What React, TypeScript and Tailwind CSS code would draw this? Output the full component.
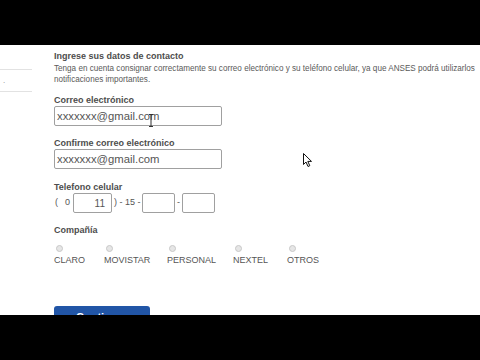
import React from 'react'

const companies = [
  { name: 'CLARO', w: 'w-[50px]' },
  { name: 'MOVISTAR', w: 'w-[63px]' },
  { name: 'PERSONAL', w: 'w-[66px]' },
  { name: 'NEXTEL', w: 'w-[54px]' },
  { name: 'OTROS', w: 'w-[40px]' },
]

const font = { fontFamily: '"Liberation Sans", Arial, sans-serif' }

const Label = ({ children }: { children: React.ReactNode }) => (
  <div className="h-[12px] text-[9px] leading-[12px] font-bold text-[#4d4d4d]">{children}</div>
)

const EmailInput = () => (
  <div className="flex h-[20px] w-[168px] items-center rounded-[2px] border border-[#a0a0a0] px-[2px] text-[11.3px] text-[#555]">
    xxxxxxx@gmail.com
  </div>
)

export default function App() {
  return (
    <div className="flex h-[360px] w-[480px] flex-col overflow-hidden bg-black" style={font}>
      <div className="h-[45px] shrink-0 bg-black" />
      <div className="relative flex h-[270px] shrink-0 overflow-hidden bg-white">
        {/* sidebar */}
        <div className="w-[54px] shrink-0">
          <div className="mt-[24px] h-px w-[32px] bg-[#e2e2e2]" />
          <div className="ml-[3px] mt-[9px] h-[3px] text-[8px] leading-[3px] text-[#888]">.</div>
          <div className="mt-[9px] h-px w-[32px] bg-[#e2e2e2]" />
        </div>

        {/* form */}
        <div className="min-w-0 flex-1 text-[#555]">
          <div className="mt-[6px] text-[9px] leading-[11px] font-bold text-[#4d4d4d]">Ingrese sus datos de contacto</div>
          <div className="mt-[1px] whitespace-nowrap text-[8.15px] leading-[11px] text-[#5a5a5a]">
            Tenga en cuenta consignar correctamente su correo electrónico y su teléfono celular, ya que ANSES podrá utilizarlos
            <br />
            notificaciones importantes.
          </div>

          <div className="mt-[9px]">
            <Label>Correo electrónico</Label>
            <div className="relative">
              <EmailInput />
              <svg className="absolute left-[94px] top-[8px]" width="6" height="13" viewBox="0 0 6 13">
                <path d="M1 0.5h4M3 0.5v12M1 12.5h4" stroke="#333" strokeWidth="1" fill="none" />
              </svg>
            </div>
          </div>

          <div className="mt-[11px]">
            <Label>Confirme correo electrónico</Label>
            <EmailInput />
          </div>

          <div className="mt-[12px]">
            <Label>Telefono celular</Label>
            <div className="flex h-[20px] items-center text-[9px] text-[#555]">
              <span className="ml-[1px] w-[10px]">(</span>
              <span className="w-[8px]">0</span>
              <div className="flex h-[20px] w-[39px] items-center justify-end rounded-[2px] border border-[#a0a0a0] pr-[6px] text-[10px]">11</div>
              <span className="ml-[2px] w-[28px]">) - 15 -</span>
              <div className="h-[20px] w-[33px] rounded-[2px] border border-[#a0a0a0]" />
              <span className="w-[7px] text-center">-</span>
              <div className="h-[20px] w-[33px] rounded-[2px] border border-[#a0a0a0]" />
            </div>
          </div>

          <div className="mt-[11px]">
            <Label>Compañía</Label>
            <div className="mt-[9px] flex">
              {companies.map((c) => (
                <div key={c.name} className={`${c.w} flex flex-col items-start`}>
                  <div className="ml-[2px] h-[7px] w-[7px] rounded-full border border-[#c8c8c8] bg-[#e6e6e6]" />
                  <div className="mt-[2px] text-[9px] leading-[12px] text-[#555]">{c.name}</div>
                </div>
              ))}
            </div>
          </div>

          <div className="mt-[40px] flex h-[24px] w-[96px] items-start justify-center rounded-[3px] bg-[#2155a6] pt-[3px] text-[11px] font-bold text-white">
            Continuar
          </div>
        </div>

        {/* mouse pointer */}
        <svg className="absolute left-[303px] top-[108px]" width="10" height="15" viewBox="0 0 10 15">
          <path d="M0.5 0.5L0.5 11.5L3 9L5 13.5L6.8 12.7L4.8 8.4L8.5 8.4Z" fill="#fff" stroke="#111" strokeWidth="1" strokeLinejoin="round" />
        </svg>
      </div>
      <div className="flex-1 bg-black" />
    </div>
  )
}
